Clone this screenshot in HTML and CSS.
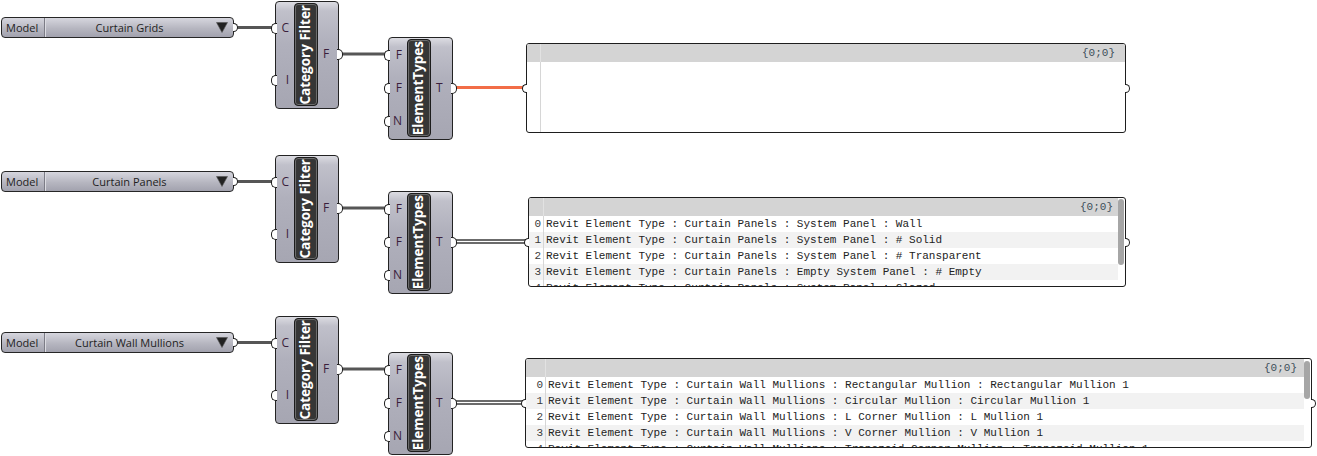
FILE: index.html
```html
<!DOCTYPE html>
<html>
<head>
<meta charset="utf-8">
<title>Grasshopper canvas</title>
<link rel="stylesheet" href="styles.css">
</head>
<body>
<div class="canvas">

  <section class="graph g1">
    <svg class="wires" width="1317" height="141" viewBox="0 0 1317 141">
      <line class="w" x1="236" y1="27.5" x2="273" y2="27.5"/>
      <line class="w" x1="341" y1="54" x2="386" y2="54"/>
      <line class="w-sel" x1="455" y1="87.5" x2="524" y2="87.5"/>
    </svg>
    <div class="vlist">
      <span class="vl-label">Model</span>
      <span class="vl-value">Curtain Grids</span>
      <svg class="vl-arrow" width="12" height="11" viewBox="0 0 12 11"><polygon points="0.5,0.5 11.5,0.5 6,10.5"/></svg>
      <span class="grip grip-r"></span>
    </div>
    <div class="node cf">
      <div class="ports in"><div class="port">C</div><div class="port">I</div></div>
      <div class="nick"><span>Category Filter</span></div>
      <div class="ports out"><div class="port">F</div></div>
    </div>
    <div class="node et">
      <div class="ports in"><div class="port">F</div><div class="port">F</div><div class="port">N</div></div>
      <div class="nick"><span>ElementTypes</span></div>
      <div class="ports out"><div class="port">T</div></div>
    </div>
    <div class="panel p1">
      <div class="panel-body">
        <div class="p-head"><div class="i"></div><div class="path">{0;0}</div></div>
        <div class="fill"><div class="i"></div></div>
      </div>
      <span class="grip grip-l"></span>
      <span class="grip grip-r"></span>
    </div>
  </section>

  <section class="graph g2">
    <svg class="wires" width="1317" height="141" viewBox="0 0 1317 141">
      <line class="w" x1="236" y1="27.5" x2="273" y2="27.5"/>
      <line class="w" x1="341" y1="54" x2="386" y2="54"/>
      <line class="w-list-outer" x1="455" y1="87.5" x2="526" y2="87.5"/>
      <line class="w-list-inner" x1="455" y1="87.5" x2="526" y2="87.5"/>
    </svg>
    <div class="vlist">
      <span class="vl-label">Model</span>
      <span class="vl-value">Curtain Panels</span>
      <svg class="vl-arrow" width="12" height="11" viewBox="0 0 12 11"><polygon points="0.5,0.5 11.5,0.5 6,10.5"/></svg>
      <span class="grip grip-r"></span>
    </div>
    <div class="node cf">
      <div class="ports in"><div class="port">C</div><div class="port">I</div></div>
      <div class="nick"><span>Category Filter</span></div>
      <div class="ports out"><div class="port">F</div></div>
    </div>
    <div class="node et">
      <div class="ports in"><div class="port">F</div><div class="port">F</div><div class="port">N</div></div>
      <div class="nick"><span>ElementTypes</span></div>
      <div class="ports out"><div class="port">T</div></div>
    </div>
    <div class="panel p2">
      <div class="panel-body scroll">
        <div class="p-head"><div class="i"></div><div class="path">{0;0}</div></div>
        <div class="rows">
          <div class="row"><span class="i">0</span><span class="t">Revit Element Type : Curtain Panels : System Panel : Wall</span></div>
          <div class="row"><span class="i">1</span><span class="t">Revit Element Type : Curtain Panels : System Panel : # Solid</span></div>
          <div class="row"><span class="i">2</span><span class="t">Revit Element Type : Curtain Panels : System Panel : # Transparent</span></div>
          <div class="row"><span class="i">3</span><span class="t">Revit Element Type : Curtain Panels : Empty System Panel : # Empty</span></div>
          <div class="row"><span class="i">4</span><span class="t">Revit Element Type : Curtain Panels : System Panel : Glazed</span></div>
        </div>
        <span class="thumb"></span>
      </div>
      <span class="grip grip-l"></span>
      <span class="grip grip-r"></span>
    </div>
  </section>

  <section class="graph g3">
    <svg class="wires" width="1317" height="141" viewBox="0 0 1317 141">
      <line class="w" x1="236" y1="27.5" x2="273" y2="27.5"/>
      <line class="w" x1="341" y1="54" x2="386" y2="54"/>
      <line class="w-list-outer" x1="455" y1="87.5" x2="523" y2="87.5"/>
      <line class="w-list-inner" x1="455" y1="87.5" x2="523" y2="87.5"/>
    </svg>
    <div class="vlist">
      <span class="vl-label">Model</span>
      <span class="vl-value">Curtain Wall Mullions</span>
      <svg class="vl-arrow" width="12" height="11" viewBox="0 0 12 11"><polygon points="0.5,0.5 11.5,0.5 6,10.5"/></svg>
      <span class="grip grip-r"></span>
    </div>
    <div class="node cf">
      <div class="ports in"><div class="port">C</div><div class="port">I</div></div>
      <div class="nick"><span>Category Filter</span></div>
      <div class="ports out"><div class="port">F</div></div>
    </div>
    <div class="node et">
      <div class="ports in"><div class="port">F</div><div class="port">F</div><div class="port">N</div></div>
      <div class="nick"><span>ElementTypes</span></div>
      <div class="ports out"><div class="port">T</div></div>
    </div>
    <div class="panel p3">
      <div class="panel-body scroll">
        <div class="p-head"><div class="i"></div><div class="path">{0;0}</div></div>
        <div class="rows">
          <div class="row"><span class="i">0</span><span class="t">Revit Element Type : Curtain Wall Mullions : Rectangular Mullion : Rectangular Mullion 1</span></div>
          <div class="row"><span class="i">1</span><span class="t">Revit Element Type : Curtain Wall Mullions : Circular Mullion : Circular Mullion 1</span></div>
          <div class="row"><span class="i">2</span><span class="t">Revit Element Type : Curtain Wall Mullions : L Corner Mullion : L Mullion 1</span></div>
          <div class="row"><span class="i">3</span><span class="t">Revit Element Type : Curtain Wall Mullions : V Corner Mullion : V Mullion 1</span></div>
          <div class="row"><span class="i">4</span><span class="t">Revit Element Type : Curtain Wall Mullions : Trapezoid Corner Mullion : Trapezoid Mullion 1</span></div>
        </div>
        <span class="thumb"></span>
      </div>
      <span class="grip grip-l"></span>
      <span class="grip grip-r"></span>
    </div>
  </section>

</div>
</body>
</html>
```

FILE: styles.css
```css
* { box-sizing: border-box; }

body {
  margin: 0;
  background: #ffffff;
  font-family: "Open Sans", "Noto Sans", sans-serif;
}

.canvas {
  position: relative;
  width: 1317px;
  height: 456px;
  overflow: hidden;
}

.graph {
  position: absolute;
  left: 0;
  width: 1317px;
  height: 141px;
}
.g1 { top: 0; }
.g2 { top: 154px; }
.g3 { top: 315px; }

.wires { position: absolute; left: 0; top: 0; }
.w { stroke: #565656; stroke-width: 3; }
.w-sel { stroke: #f26d47; stroke-width: 3; }
.w-list-outer { stroke: #3a3a3a; stroke-width: 4.5; }
.w-list-inner { stroke: #ffffff; stroke-width: 1.5; }

/* grips */
.grip {
  position: absolute;
  top: 50%;
  width: 5px;
  height: 9px;
  margin-top: -4.5px;
  background: #ffffff;
  border: 1.5px solid #1c1c1c;
}
.grip-r { right: -5px; border-left: none; border-radius: 0 5px 5px 0; }
.grip-l { left: -5px; border-right: none; border-radius: 5px 0 0 5px; }

/* value list */
.vlist {
  position: absolute;
  left: 1px;
  top: 17px;
  width: 233px;
  height: 21px;
  display: flex;
  align-items: center;
  border: 1px solid #262626;
  border-radius: 4px;
  background: linear-gradient(#d6d6de, #b6b6c0 55%, #a2a2ae);
  font-size: 11px;
  color: #1e1e1e;
}
.vl-label {
  width: 43px;
  height: 100%;
  display: flex;
  align-items: center;
  padding-left: 4px;
  border-right: 1px solid #7c7c86;
  box-shadow: 1px 0 0 #dcdce2;
}
.vl-value {
  flex: 1;
  text-align: center;
  white-space: nowrap;
}
.vl-arrow {
  flex: none;
  margin: 0 5px 0 2px;
}
.vl-arrow polygon { fill: #222222; stroke: #555555; stroke-width: 0.6; }

/* components */
.node {
  position: absolute;
  display: flex;
  border: 1px solid #232323;
  border-radius: 4px;
  background: linear-gradient(#dcdce2 0, #c0c0ca 9px, #b0b0bc 40%, #a6a6b2 100%);
  font-size: 12px;
  color: #3a1e3c;
}
.cf { left: 275px; top: 1px; width: 64px; height: 108px; }
.et { left: 388px; top: 37px; width: 65px; height: 103px; }

.ports {
  display: flex;
  flex-direction: column;
  padding-bottom: 3px;
}
.et .ports { padding-bottom: 2px; }
.ports.in { width: 18px; flex: none; }
.ports.out { flex: 1; }
.port {
  flex: 1;
  position: relative;
  display: flex;
  align-items: center;
}
.ports.in .port { justify-content: flex-end; padding-right: 5px; }
.ports.out .port { padding-left: 5px; }

.ports.in .port::before,
.ports.out .port::after {
  content: "";
  position: absolute;
  top: 50%;
  width: 5px;
  height: 9px;
  margin-top: -4.5px;
  background: #ffffff;
  border: 1.5px solid #1c1c1c;
}
.ports.in .port::before { left: -5px; border-right: none; border-radius: 5px 0 0 5px; }
.ports.out .port::after { right: -5px; border-left: none; border-radius: 0 5px 5px 0; }

.nick {
  width: 24px;
  flex: none;
  margin: 1px 0 2px;
  display: flex;
  align-items: center;
  justify-content: center;
  background: #363636;
  border: 1px solid #1c1c1c;
  border-radius: 4px;
  box-shadow: inset 0 0 0 1px #6c6c6c;
}
.nick span {
  writing-mode: vertical-rl;
  transform: rotate(180deg);
  color: #ffffff;
  font-weight: 700;
  font-size: 13.5px;
  white-space: nowrap;
  line-height: 1;
}

/* panels */
.panel {
  position: absolute;
  top: 43px;
  height: 90px;
  border: 1px solid #1e1e1e;
  border-radius: 3px;
  background: #ffffff;
}
.p1 { left: 526px; width: 600px; }
.p2 { left: 528px; width: 598px; }
.p3 { left: 525px; width: 787px; }

.panel-body {
  position: relative;
  height: 100%;
  overflow: hidden;
  border-radius: 2px;
  display: flex;
  flex-direction: column;
  font-family: "Liberation Mono", "DejaVu Sans Mono", monospace;
  font-size: 11px;
}
.panel-body.scroll { padding-right: 7px; }

.p-head {
  height: 18px;
  flex: none;
  display: flex;
  background: #d4d4d4;
}
.p-head .i { border-right: 1px solid #e2e2e2; }
.p-head .path {
  flex: 1;
  text-align: right;
  line-height: 18px;
  padding-right: 10px;
  color: #3d4f5a;
}
.p2 .p-head .path { padding-right: 5px; }
.p3 .p-head .path { padding-right: 7px; }

.i { flex: none; }
.p1 .i { width: 14px; }
.p2 .i { width: 15px; }
.p3 .i { width: 20px; }

.rows { display: flex; flex-direction: column; }
.row {
  height: 16px;
  flex: none;
  display: flex;
  line-height: 17px;
  white-space: nowrap;
}
.rows .row:nth-child(even) { background: #f2f2f2; }
.row .i {
  text-align: right;
  padding-right: 2px;
  border-right: 1px solid #d6d6d6;
  color: #3a3a3a;
}
.row .t {
  padding-left: 2px;
  color: #222222;
}

.fill { flex: 1; display: flex; }
.fill .i { border-right: 1px solid #d6d6d6; }

.thumb {
  position: absolute;
  right: 1px;
  width: 6px;
  border-radius: 3px;
  background: #a6a6a6;
}
.p2 .thumb { top: 1px; height: 66px; }
.p3 .thumb { top: 2px; height: 38px; }
```
